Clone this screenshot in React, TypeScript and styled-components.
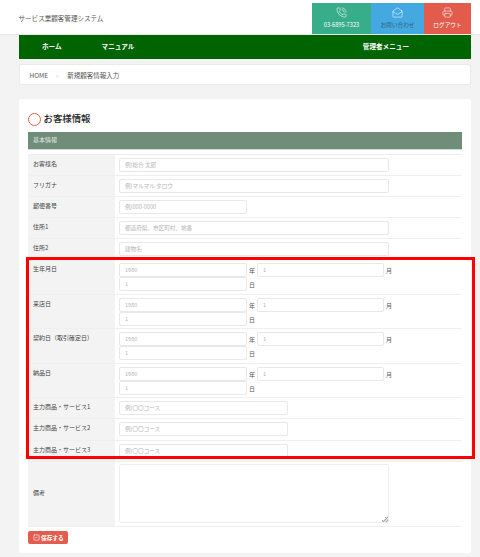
import { createGlobalStyle } from "styled-components";
import styled from "styled-components";
import { PhoneCall, MailOpen, Printer, SquareCheck } from "lucide-react";

const GlobalStyle = createGlobalStyle`
  html, body {
    margin: 0;
    padding: 0;
    background: #f3f3f3;
    font-family: "Noto Sans CJK JP", "Liberation Sans", sans-serif;
    color: #444;
  }
  * {
    box-sizing: border-box;
  }
`;

const Page = styled.div`
  width: 480px;
  height: 557px;
  overflow: hidden;
`;

const Header = styled.header`
  display: flex;
  align-items: stretch;
  height: 35px;
  padding: 2.5px 9px 0 18.5px;
  background: #fff;
  border-bottom: 1px solid #e8e8e8;
`;

const SiteTitle = styled.div`
  margin-right: auto;
  align-self: center;
  padding-bottom: 1px;
  font-size: 6.55px;
  color: #555;
`;

const HeaderButton = styled.a<{ $bg: string; $w: number; $fg?: string }>`
  display: flex;
  flex-direction: column;
  align-items: center;
  width: ${(p) => p.$w}px;
  padding-top: 4px;
  background: ${(p) => p.$bg};
  color: ${(p) => p.$fg || "#fff"};
  font-size: 5.7px;
  line-height: 8px;

  svg {
    width: 11px;
    height: 11px;
    margin-bottom: 3px;
    color: #fff;
    stroke-width: 1.2;
  }
`;

const Nav = styled.nav`
  display: flex;
  align-items: center;
  gap: 40px;
  height: 24px;
  margin: -0.5px 9px 0 18.5px;
  padding: 0 62px 1px 23.5px;
  background: #006400;
  color: #fff;
  font-size: 6.6px;
  font-weight: 700;
`;

const NavRight = styled.span`
  margin-left: auto;
`;

const Breadcrumb = styled.div`
  display: flex;
  align-items: center;
  height: 21px;
  margin: 5.5px 9px 0 18.5px;
  padding: 0 10px;
  background: #fff;
  border: 1px solid #eaeaea;
  border-radius: 2px;
  font-size: 6.5px;
  color: #555;
`;

const Crumb = styled.span`
  margin: 0 9px 0 8px;
  color: #e9a09a;
`;

const Card = styled.main`
  margin: 14px 9px 0 18.5px;
  height: 454px;
  padding: 14px 9.5px 0;
  background: #fff;
  border-radius: 3px;
`;

const Heading = styled.h2`
  display: flex;
  align-items: flex-start;
  gap: 2.5px;
  height: 11px;
  margin: 0 0 8px;
  font-size: 9.4px;
  line-height: 10px;
  font-weight: 500;
  color: #222;

  &::before {
    content: "";
    width: 11px;
    height: 11px;
    border: 1.3px solid #e8604c;
    border-radius: 50%;
  }
`;

const SectionBar = styled.div`
  height: 17.5px;
  padding: 0 5px 2px;
  margin-bottom: 4.5px;
  line-height: 16px;
  background: #6f8d78;
  border-bottom: 1px solid #cfdcd2;
  color: #e6ece8;
  font-size: 6px;
`;

const Table = styled.div`
  border-top: 1px solid #eee;
`;

const Row = styled.div<{ $h: number }>`
  display: grid;
  grid-template-columns: 87px 1fr;
  height: ${(p) => p.$h}px;
  border-bottom: 1px solid #efefef;
`;

const Label = styled.div<{ $center?: boolean }>`
  display: flex;
  align-items: ${(p) => (p.$center ? "center" : "flex-start")};
  padding: ${(p) => (p.$center ? "0 0 4px 5px" : "4px 0 0 5px")};
  background: #f3f3f3;
  font-size: 6px;
  line-height: 9px;
  white-space: nowrap;
  color: #444;
`;

const Value = styled.div`
  padding: 3px 0 0 4px;
`;

const Field = styled.input<{ $w: number }>`
  display: block;
  flex: none;
  width: ${(p) => p.$w}px;
  height: 14px;
  padding: 0 5px;
  background: #fff;
  border: 1px solid #e8e8e8;
  border-radius: 2px;
  outline: none;
  font-family: inherit;
  font-size: 5.6px;

  &::placeholder {
    color: #b5b5b5;
    opacity: 1;
  }
`;

const DateLine = styled.div`
  display: flex;
  align-items: center;
  height: 14px;
`;

const Unit = styled.span`
  margin: 0 1.5px 0 2px;
  width: 6.5px;
  font-size: 6px;
  color: #555;
`;

const Memo = styled.textarea`
  display: block;
  width: 270px;
  height: 59px;
  margin-top: -1px;
  padding: 4px 5px;
  background: #fff;
  border: 1px solid #eee;
  border-radius: 2px;
  outline: none;

  &::-webkit-resizer {
    background:
      linear-gradient(135deg, #fff 50%, transparent 50%) right bottom / 7px 7px no-repeat,
      repeating-linear-gradient(135deg, #a8a8a8 0 1px, #dcdcdc 1px 2px) right bottom / 7px 7px no-repeat;
  }
`;

// 赤枠はレビュー用の注釈なので行の上に重ねる
const Highlight = styled.div`
  position: relative;

  &::after {
    content: "";
    position: absolute;
    top: -3px;
    left: -2px;
    right: -13px;
    bottom: 3px;
    border: 3px solid #f00;
    pointer-events: none;
  }
`;

const SaveButton = styled.button`
  display: flex;
  align-items: center;
  gap: 1.5px;
  height: 13px;
  margin-top: 4px;
  padding: 0 4px 0 4.5px;
  background: #e35d4f;
  border: 0;
  border-radius: 2px;
  color: #fff;
  font-family: inherit;
  font-size: 5.65px;
  font-weight: 700;

  svg {
    width: 7px;
    height: 7px;
  }
`;

const textRows = [
  { label: "お客様名", placeholder: "例)総合 太郎", w: 270 },
  { label: "フリガナ", placeholder: "例)マルマル タロウ", w: 270 },
  { label: "郵便番号", placeholder: "例)000-0000", w: 128 },
  { label: "住所1", placeholder: "都道府県、市区町村、地番", w: 270 },
  { label: "住所2", placeholder: "建物名", w: 270 },
];

const dateRows = [
  { label: "生年月日", h: 35 },
  { label: "来店日", h: 34 },
  { label: "契約日（取引確定日）", h: 35 },
  { label: "納品日", h: 34 },
];

const serviceRows = [
  { label: "主力商品・サービス1", h: 21 },
  { label: "主力商品・サービス2", h: 22 },
  { label: "主力商品・サービス3", h: 21 },
];

const App = () => {
  return (
    <Page>
      <GlobalStyle />
      <Header>
        <SiteTitle>サービス業顧客管理システム</SiteTitle>
        <HeaderButton $bg="#38ad8a" $w={59}>
          <PhoneCall />
          03-6895-7323
        </HeaderButton>
        <HeaderButton $bg="#45a9e1" $w={53} $fg="#2f5f80">
          <MailOpen />
          お問い合わせ
        </HeaderButton>
        <HeaderButton $bg="#e35b4a" $w={47}>
          <Printer />
          ログアウト
        </HeaderButton>
      </Header>
      <Nav>
        <span>ホーム</span>
        <span>マニュアル</span>
        <NavRight>管理者メニュー</NavRight>
      </Nav>
      <Breadcrumb>
        HOME<Crumb>›</Crumb>新規顧客情報入力
      </Breadcrumb>
      <Card>
        <Heading>お客様情報</Heading>
        <SectionBar>基本情報</SectionBar>
        <Table>
          {textRows.map((row) => (
            <Row key={row.label} $h={21}>
              <Label>{row.label}</Label>
              <Value>
                <Field $w={row.w} placeholder={row.placeholder} />
              </Value>
            </Row>
          ))}
          <Highlight>
            {dateRows.map((row) => (
              <Row key={row.label} $h={row.h}>
                <Label>{row.label}</Label>
                <Value>
                  <DateLine>
                    <Field $w={128} placeholder="1980" />
                    <Unit>年</Unit>
                    <Field $w={127} placeholder="1" />
                    <Unit>月</Unit>
                  </DateLine>
                  <DateLine>
                    <Field $w={128} placeholder="1" />
                    <Unit>日</Unit>
                  </DateLine>
                </Value>
              </Row>
            ))}
            {serviceRows.map((row) => (
              <Row key={row.label} $h={row.h}>
                <Label>{row.label}</Label>
                <Value>
                  <Field $w={169} placeholder="例)〇〇コース" />
                </Value>
              </Row>
            ))}
          </Highlight>
          <Row $h={65}>
            <Label $center>備考</Label>
            <Value>
              <Memo />
            </Value>
          </Row>
        </Table>
        <SaveButton>
          <SquareCheck />
          保存する
        </SaveButton>
      </Card>
    </Page>
  );
};

export default App;
